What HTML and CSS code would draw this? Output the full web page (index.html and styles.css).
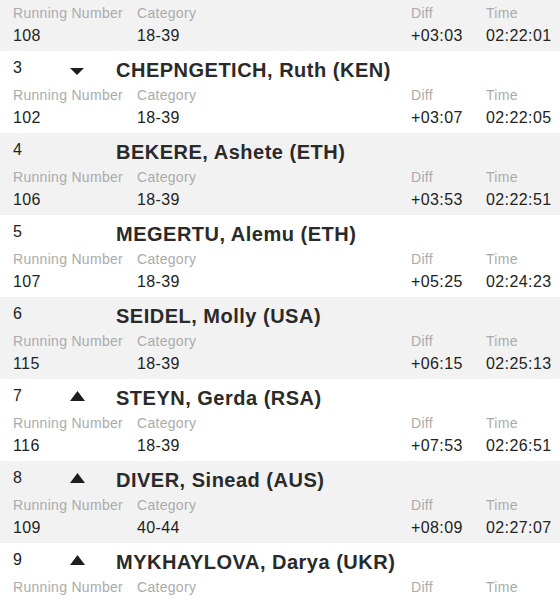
FILE: index.html
```html
<!DOCTYPE html>
<html>
<head>
<meta charset="utf-8">
<link rel="stylesheet" href="styles.css">
</head>
<body>
<div class="list">
  <div class="row alt partial">
    <div class="details">
      <span class="lbl">Running Number</span><span class="lbl">Category</span><span class="lbl">Diff</span><span class="lbl">Time</span>
      <span class="val">108</span><span class="val">18-39</span><span class="val">+03:03</span><span class="val">02:22:01</span>
    </div>
  </div>
  <div class="row">
    <div class="head"><span class="rank">3</span><span class="trend"><svg class="down" width="14" height="7" viewBox="0 0 14 7"><polygon points="0,0 14,0 7,7"/></svg></span><span class="name">CHEPNGETICH, Ruth (KEN)</span></div>
    <div class="details">
      <span class="lbl">Running Number</span><span class="lbl">Category</span><span class="lbl">Diff</span><span class="lbl">Time</span>
      <span class="val">102</span><span class="val">18-39</span><span class="val">+03:07</span><span class="val">02:22:05</span>
    </div>
  </div>
  <div class="row alt">
    <div class="head"><span class="rank">4</span><span class="trend"></span><span class="name">BEKERE, Ashete (ETH)</span></div>
    <div class="details">
      <span class="lbl">Running Number</span><span class="lbl">Category</span><span class="lbl">Diff</span><span class="lbl">Time</span>
      <span class="val">106</span><span class="val">18-39</span><span class="val">+03:53</span><span class="val">02:22:51</span>
    </div>
  </div>
  <div class="row">
    <div class="head"><span class="rank">5</span><span class="trend"></span><span class="name">MEGERTU, Alemu (ETH)</span></div>
    <div class="details">
      <span class="lbl">Running Number</span><span class="lbl">Category</span><span class="lbl">Diff</span><span class="lbl">Time</span>
      <span class="val">107</span><span class="val">18-39</span><span class="val">+05:25</span><span class="val">02:24:23</span>
    </div>
  </div>
  <div class="row alt">
    <div class="head"><span class="rank">6</span><span class="trend"></span><span class="name">SEIDEL, Molly (USA)</span></div>
    <div class="details">
      <span class="lbl">Running Number</span><span class="lbl">Category</span><span class="lbl">Diff</span><span class="lbl">Time</span>
      <span class="val">115</span><span class="val">18-39</span><span class="val">+06:15</span><span class="val">02:25:13</span>
    </div>
  </div>
  <div class="row">
    <div class="head"><span class="rank">7</span><span class="trend"><svg class="up" width="15" height="10" viewBox="0 0 15 10"><polygon points="7.5,0 15,10 0,10"/></svg></span><span class="name">STEYN, Gerda (RSA)</span></div>
    <div class="details">
      <span class="lbl">Running Number</span><span class="lbl">Category</span><span class="lbl">Diff</span><span class="lbl">Time</span>
      <span class="val">116</span><span class="val">18-39</span><span class="val">+07:53</span><span class="val">02:26:51</span>
    </div>
  </div>
  <div class="row alt">
    <div class="head"><span class="rank">8</span><span class="trend"><svg class="up" width="15" height="10" viewBox="0 0 15 10"><polygon points="7.5,0 15,10 0,10"/></svg></span><span class="name">DIVER, Sinead (AUS)</span></div>
    <div class="details">
      <span class="lbl">Running Number</span><span class="lbl">Category</span><span class="lbl">Diff</span><span class="lbl">Time</span>
      <span class="val">109</span><span class="val">40-44</span><span class="val">+08:09</span><span class="val">02:27:07</span>
    </div>
  </div>
  <div class="row">
    <div class="head"><span class="rank">9</span><span class="trend"><svg class="up" width="15" height="10" viewBox="0 0 15 10"><polygon points="7.5,0 15,10 0,10"/></svg></span><span class="name">MYKHAYLOVA, Darya (UKR)</span></div>
    <div class="details">
      <span class="lbl">Running Number</span><span class="lbl">Category</span><span class="lbl">Diff</span><span class="lbl">Time</span>
      <span class="val">&nbsp;</span><span class="val">&nbsp;</span><span class="val">&nbsp;</span><span class="val">&nbsp;</span>
    </div>
  </div>
</div>
</body>
</html>
```
FILE: styles.css
```css
html, body {
  margin: 0;
  padding: 0;
  background: #ffffff;
}
body {
  font-family: "Liberation Sans", Arial, sans-serif;
  color: #222222;
  overflow: hidden;
  height: 600px;
}
.list {
  display: flex;
  flex-direction: column;
}
.row {
  height: 82px;
  box-sizing: border-box;
  padding: 4px 6px 3px 13px;
  background: #ffffff;
}
.row.alt {
  background: #f2f2f2;
}
.row.partial {
  height: 51px;
  padding-top: 3px;
}
.head {
  display: flex;
  align-items: flex-start;
  height: 30px;
}
.rank {
  width: 57px;
  font-size: 16px;
  line-height: 25px;
}
.trend {
  width: 46px;
  display: flex;
}
.trend svg {
  fill: #1e1e1e;
  display: block;
}
.trend .down {
  margin-top: 13px;
}
.trend .up {
  margin-top: 8px;
}
.name {
  font-size: 20px;
  line-height: 30px;
  font-weight: bold;
  letter-spacing: 0.5px;
  color: #2a2a2a;
}
.details {
  display: grid;
  grid-template-columns: 124px 1fr 75px 68px;
  grid-template-rows: 20px 25px;
}
.lbl {
  font-size: 14px;
  line-height: 20px;
  letter-spacing: 0.3px;
  color: #ababab;
  white-space: nowrap;
}
.val {
  font-size: 16px;
  line-height: 25px;
  letter-spacing: 0.4px;
  white-space: nowrap;
}
```
